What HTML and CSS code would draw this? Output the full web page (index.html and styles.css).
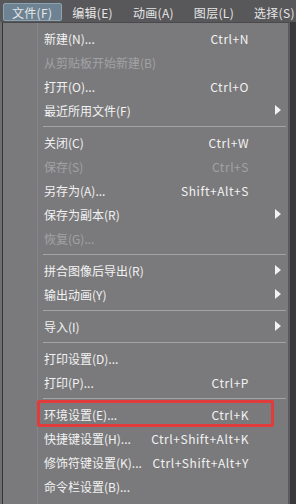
FILE: index.html
```html
<!DOCTYPE html>
<html lang="zh-CN">
<head>
<meta charset="utf-8">
<title>文件菜单</title>
<link rel="stylesheet" href="styles.css">
</head>
<body>
<div class="menubar">
  <div class="mb-item active">文件(F)</div>
  <div class="mb-item">编辑(E)</div>
  <div class="mb-item">动画(A)</div>
  <div class="mb-item">图层(L)</div>
  <div class="mb-item">选择(S)</div>
</div>
<div class="stage">
  <div class="gutter"></div>
  <div class="menu">
    <div class="item"><span class="label">新建(N)...</span><span class="key">Ctrl+N</span><span class="sub"></span></div>
    <div class="item disabled"><span class="label">从剪贴板开始新建(B)</span><span class="key"></span><span class="sub"></span></div>
    <div class="item"><span class="label">打开(O)...</span><span class="key">Ctrl+O</span><span class="sub"></span></div>
    <div class="item"><span class="label">最近所用文件(F)</span><span class="key"></span><span class="sub"><i class="arrow"></i></span></div>
    <div class="sep"></div>
    <div class="item"><span class="label">关闭(C)</span><span class="key">Ctrl+W</span><span class="sub"></span></div>
    <div class="item disabled"><span class="label">保存(S)</span><span class="key">Ctrl+S</span><span class="sub"></span></div>
    <div class="item"><span class="label">另存为(A)...</span><span class="key">Shift+Alt+S</span><span class="sub"></span></div>
    <div class="item"><span class="label">保存为副本(R)</span><span class="key"></span><span class="sub"><i class="arrow"></i></span></div>
    <div class="item disabled"><span class="label">恢复(G)...</span><span class="key"></span><span class="sub"></span></div>
    <div class="sep"></div>
    <div class="item"><span class="label">拼合图像后导出(R)</span><span class="key"></span><span class="sub"><i class="arrow"></i></span></div>
    <div class="item"><span class="label">输出动画(Y)</span><span class="key"></span><span class="sub"><i class="arrow"></i></span></div>
    <div class="sep"></div>
    <div class="item"><span class="label">导入(I)</span><span class="key"></span><span class="sub"><i class="arrow"></i></span></div>
    <div class="sep"></div>
    <div class="item"><span class="label">打印设置(D)...</span><span class="key"></span><span class="sub"></span></div>
    <div class="item"><span class="label">打印(P)...</span><span class="key">Ctrl+P</span><span class="sub"></span></div>
    <div class="sep"></div>
    <div class="item marked"><span class="label">环境设置(E)...</span><span class="key">Ctrl+K</span><span class="sub"></span><span class="highlight"></span></div>
    <div class="item"><span class="label">快捷键设置(H)...</span><span class="key">Ctrl+Shift+Alt+K</span><span class="sub"></span></div>
    <div class="item"><span class="label">修饰符键设置(K)...</span><span class="key">Ctrl+Shift+Alt+Y</span><span class="sub"></span></div>
    <div class="item"><span class="label">命令栏设置(B)...</span><span class="key"></span><span class="sub"></span></div>
  </div>
  <div class="backdrop"></div>
</div>
</body>
</html>
```

FILE: styles.css
```css
* { box-sizing: border-box; }
html, body {
  margin: 0;
  padding: 0;
  width: 296px;
  height: 504px;
  overflow: hidden;
  background: #3a3a3c;
  font-family: "Noto Sans CJK SC", "Noto Sans", sans-serif;
}
.menubar {
  height: 22px;
  background: #58585a;
  display: flex;
  padding: 3px 0 0 3px;
  color: #e6e6e6;
  font-size: 12px;
  overflow: hidden;
}
.mb-item {
  flex: none;
  height: 18px;
  line-height: 17px;
  padding: 0 9px 0 8px;
  margin-right: 1px;
  border: 1px solid transparent;
  border-radius: 2px;
  white-space: nowrap;
  letter-spacing: 0.3px;
}
.mb-item.active {
  background: #6d8393;
  border-color: #8ea3b1;
}
.stage {
  display: flex;
  height: 482px;
}
.gutter {
  width: 2px;
  background: #6e6e70;
}
.menu {
  width: 288px;
  border-left: 1px solid #363638;
  border-top: 1px solid #4a4a4c;
  border-right: 2px solid #5c5c5e;
  padding-top: 3px;
  background:
    linear-gradient(to right, transparent 34px, #868688 34px, #868688 35px, transparent 35px),
    #7a7a7c;
  color: #f2f2f2;
  font-size: 12px;
}
.backdrop {
  flex: 1;
  background: #39393b;
}
.item {
  position: relative;
  display: flex;
  align-items: center;
  height: 24px;
  padding-left: 41px;
  white-space: nowrap;
}
.item .label { flex: 1; }
.item .key {
  text-align: right;
  letter-spacing: 0.55px;
}
.item .sub {
  width: 39px;
  display: flex;
  align-items: center;
  padding-left: 26px;
}
.item.disabled { color: #a2a2a4; }
.arrow {
  display: block;
  width: 0;
  height: 0;
  border-left: 6px solid #f2f2f2;
  border-top: 5px solid transparent;
  border-bottom: 5px solid transparent;
}
.sep {
  height: 8px;
  display: flex;
  align-items: center;
  padding: 0 2px 0 40px;
}
.sep::before {
  content: "";
  display: block;
  width: 100%;
  height: 1px;
  background: #a4a4a6;
}
.highlight {
  position: absolute;
  left: 34px;
  top: -2px;
  width: 237px;
  height: 27px;
  border: 3px solid #e23b3b;
  border-radius: 2px;
}
```
